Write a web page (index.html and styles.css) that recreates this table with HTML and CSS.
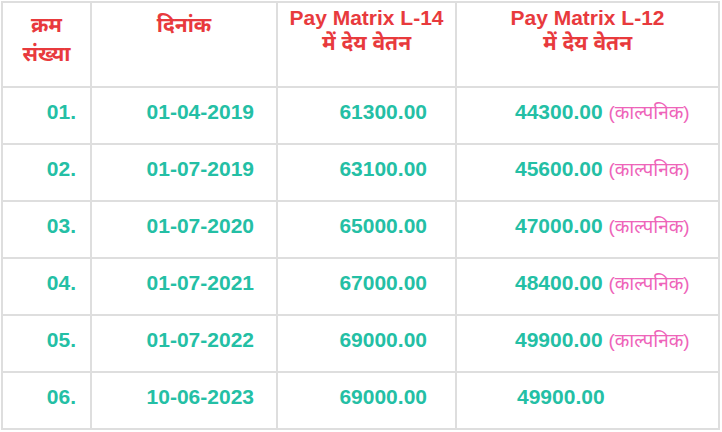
FILE: index.html
```html
<!DOCTYPE html>
<html lang="hi">
<head>
<meta charset="utf-8">
<link rel="stylesheet" href="styles.css">
</head>
<body>
<table class="pay">
  <colgroup>
    <col class="c1"><col class="c2"><col class="c3"><col class="c4">
  </colgroup>
  <thead>
    <tr class="head-row">
      <th class="h-dev">क्रम<br>संख्या</th>
      <th class="h-dev">दिनांक</th>
      <th class="h-mix">Pay Matrix L-14<br>में देय वेतन</th>
      <th class="h-mix">Pay Matrix L-12<br>में देय वेतन</th>
    </tr>
  </thead>
  <tbody>
    <tr class="row"><td class="sn">01.</td><td class="dt">01-04-2019</td><td class="amt">61300.00</td><td class="amt2">44300.00 <span class="note">(काल्पनिक)</span></td></tr>
    <tr class="row"><td class="sn">02.</td><td class="dt">01-07-2019</td><td class="amt">63100.00</td><td class="amt2">45600.00 <span class="note">(काल्पनिक)</span></td></tr>
    <tr class="row"><td class="sn">03.</td><td class="dt">01-07-2020</td><td class="amt">65000.00</td><td class="amt2">47000.00 <span class="note">(काल्पनिक)</span></td></tr>
    <tr class="row"><td class="sn">04.</td><td class="dt">01-07-2021</td><td class="amt">67000.00</td><td class="amt2">48400.00 <span class="note">(काल्पनिक)</span></td></tr>
    <tr class="row"><td class="sn">05.</td><td class="dt">01-07-2022</td><td class="amt">69000.00</td><td class="amt2">49900.00 <span class="note">(काल्पनिक)</span></td></tr>
    <tr class="row"><td class="sn">06.</td><td class="dt">10-06-2023</td><td class="amt">69000.00</td><td class="amt2 last">49900.00</td></tr>
  </tbody>
</table>
</body>
</html>
```
FILE: styles.css
```css
html, body {
  margin: 0;
  padding: 0;
  background: #ffffff;
}
body {
  padding: 1px 0 0 1px;
  font-family: "Liberation Sans", Arial, "Noto Sans Devanagari", "Noto Sans", sans-serif;
  font-weight: bold;
  font-size: 21px;
}
.pay {
  border-collapse: collapse;
  table-layout: fixed;
  width: 717px;
}
.c1 { width: 89px; }
.c2 { width: 186px; }
.c3 { width: 179px; }
.c4 { width: 263px; }
.pay th, .pay td {
  border: 2px solid #dedede;
  padding: 0;
}
.head-row { height: 85px; }
.row { height: 57px; }
.pay th {
  vertical-align: top;
  color: #e83a3d;
  font-weight: bold;
  text-align: center;
}
.pay .h-dev {
  line-height: 29px;
  padding-top: 7px;
}
.pay .h-mix {
  line-height: 25px;
  padding-top: 2px;
}
.pay td {
  vertical-align: top;
  color: #24bfa5;
  line-height: 24px;
  padding-top: 12px;
}
.pay .sn { text-align: right; padding-right: 14px; }
.pay .dt { text-align: right; padding-right: 22px; }
.pay .amt { text-align: right; padding-right: 28px; }
.pay .amt2 { text-align: left; padding-left: 58px; white-space: nowrap; }
.pay .amt2.last { padding-left: 60px; }
.note {
  color: #ee64b9;
  font-size: 19px;
  font-weight: normal;
}
```
